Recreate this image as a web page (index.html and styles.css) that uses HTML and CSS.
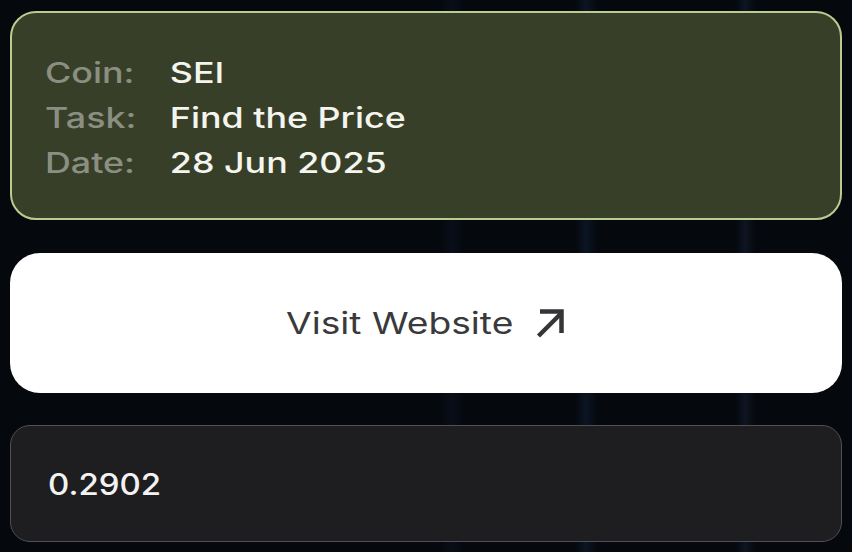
FILE: index.html
```html
<!DOCTYPE html>
<html lang="en">
<head>
<meta charset="utf-8">
<title>Task</title>
<link rel="stylesheet" href="styles.css">
</head>
<body>
<main class="screen">
  <section class="task-card">
    <dl class="task-list">
      <div class="task-row"><dt>Coin:</dt><dd>SEI</dd></div>
      <div class="task-row"><dt>Task:</dt><dd>Find the Price</dd></div>
      <div class="task-row"><dt>Date:</dt><dd>28 Jun 2025</dd></div>
    </dl>
  </section>
  <a class="visit-btn" href="#">
    <span class="visit-label">Visit Website</span>
    <svg class="visit-icon" viewBox="0 0 30 30" width="30" height="30" aria-hidden="true">
      <path d="M5 3.5H26.5V25" fill="none" stroke="currentColor" stroke-width="4.5" stroke-linejoin="miter"/>
      <path d="M3.5 28L25.5 6" fill="none" stroke="currentColor" stroke-width="4.5"/>
    </svg>
  </a>
  <div class="answer-box"><span class="answer-value">0.2902</span></div>
</main>
</body>
</html>
```

FILE: styles.css
```css
html, body {
  margin: 0;
  padding: 0;
}
body {
  width: 852px;
  height: 552px;
  overflow: hidden;
  font-family: Inter, "Noto Sans", "Liberation Sans", sans-serif;
  background-color: #05080d;
  background-image:
    linear-gradient(90deg,
      transparent 0, transparent 440px,
      rgba(40,70,120,0.10) 452px, transparent 465px,
      transparent 575px, rgba(40,80,140,0.18) 586px, transparent 598px,
      transparent 735px, rgba(50,80,130,0.18) 745px, transparent 756px,
      transparent 100%);
}
.screen {
  display: flex;
  flex-direction: column;
  padding: 11px 10px 0 10px;
}
.task-card {
  height: 209px;
  box-sizing: border-box;
  background: #383f28;
  border: 2px solid #bccb90;
  border-radius: 26px;
  padding: 38px 0 0 33px;
  overflow: hidden;
}
.task-list {
  margin: 0;
  width: max-content;
  display: flex;
  flex-direction: column;
  transform: scaleX(1.28);
  transform-origin: left center;
}
.task-row {
  display: grid;
  grid-template-columns: 97.5px max-content;
  font-size: 28px;
  line-height: 45px;
  height: 45px;
}
.task-row dt {
  color: #8b8f82;
  font-weight: 500;
}
.task-row dd {
  margin: 0;
  color: #f4f5ee;
  font-weight: 500;
}
.visit-btn {
  margin-top: 33px;
  height: 140px;
  box-sizing: border-box;
  background: #ffffff;
  border-radius: 30px;
  display: flex;
  align-items: center;
  justify-content: center;
  gap: 22px;
  color: #3a3a3c;
  text-decoration: none;
  font-size: 30px;
  font-weight: 400;
}
.visit-label {
  display: inline-block;
  line-height: 1;
  margin: 0 21px;
  transform: scaleX(1.24);
}
.visit-icon {
  display: block;
  color: #353538;
}
.answer-box {
  margin-top: 32px;
  height: 117px;
  box-sizing: border-box;
  background: #1e1d20;
  border: 1.5px solid #505054;
  border-radius: 20px;
  padding-left: 37px;
  display: flex;
  align-items: center;
  color: #f2f2f2;
  font-size: 30px;
  font-weight: 500;
}
.answer-value {
  display: inline-block;
  transform: scaleX(1.1);
  transform-origin: left center;
}
```
